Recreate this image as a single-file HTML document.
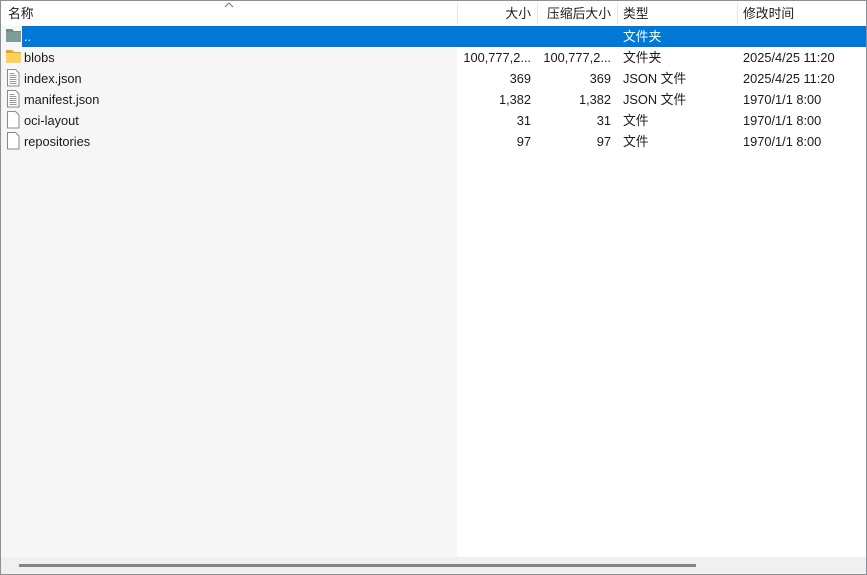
<!DOCTYPE html>
<html><head><meta charset="utf-8"><style>
*{margin:0;padding:0;box-sizing:border-box}
body{width:867px;height:575px;background:#fff;font-family:"Liberation Sans","Noto Sans CJK SC",sans-serif;font-size:12.8px;color:#1a1a1a;position:relative;overflow:hidden}
.frame{position:absolute;left:0;top:0;width:867px;height:575px;border:1px solid #8b9099}
.namebg{position:absolute;left:1px;top:26px;width:456px;height:531px;background:#f6f6f6}
.hdr{position:absolute;top:1px;height:25px;line-height:25px}
.sep{position:absolute;top:3px;width:1px;height:21px;background:#e5e5e5}
.row{position:absolute;left:1px;width:865px;height:21px;line-height:22px}
.c{position:absolute;white-space:nowrap}
.sel{position:absolute;left:22px;top:26px;width:844px;height:21px;background:#0078d7}
.sb{position:absolute;left:1px;top:557px;width:865px;height:17px;background:#f0f0f0}
.thumb{position:absolute;left:19px;top:564px;width:677px;height:3px;background:#858585}
</style></head><body>
<div class="namebg"></div>
<div class="hdr c" style="left:8px">名称</div>
<svg style="position:absolute;left:224px;top:2px" width="10" height="6"><path d="M1 5L5 1L9 5" fill="none" stroke="#777" stroke-width="1"/></svg>
<div class="hdr c" style="right:336px">大小</div>
<div class="hdr c" style="right:256px">压缩后大小</div>
<div class="hdr c" style="left:623px">类型</div>
<div class="hdr c" style="left:743px">修改时间</div>
<div class="sep" style="left:457px"></div>
<div class="sep" style="left:537px"></div>
<div class="sep" style="left:617px"></div>
<div class="sep" style="left:737px"></div>
<div class="sel"></div>
<svg style="position:absolute;left:5px;top:28px" width="17" height="15"><path d="M1 1h6l2 2h7v11H1z" fill="#6f8f86"/><rect x="1" y="4" width="15" height="10" fill="#7f9c9a"/></svg>
<svg style="position:absolute;left:5px;top:49px" width="17" height="15"><path d="M1 1h6l2 2h7v11H1z" fill="#e8a722"/><rect x="1" y="4" width="15" height="10" fill="#fcd15a"/></svg>
<svg style="position:absolute;left:7px;top:69px" width="13" height="18"><path d="M.5 .5h8l3.5 3.5v13H.5z" fill="#fff" stroke="#8a8a8a"/><path d="M2.5 4.5h5M2.5 6.5h7M2.5 8.5h7M2.5 10.5h7M2.5 12.5h7M2.5 14.5h7" stroke="#999" stroke-width="1"/></svg>
<svg style="position:absolute;left:7px;top:90px" width="13" height="18"><path d="M.5 .5h8l3.5 3.5v13H.5z" fill="#fff" stroke="#8a8a8a"/><path d="M2.5 4.5h5M2.5 6.5h7M2.5 8.5h7M2.5 10.5h7M2.5 12.5h7M2.5 14.5h7" stroke="#999" stroke-width="1"/></svg>
<svg style="position:absolute;left:7px;top:111px" width="13" height="18"><path d="M.5 .5h8l3.5 3.5v13H.5z" fill="#fff" stroke="#8a8a8a"/></svg>
<svg style="position:absolute;left:7px;top:132px" width="13" height="18"><path d="M.5 .5h8l3.5 3.5v13H.5z" fill="#fff" stroke="#8a8a8a"/></svg>
<div class="row" style="top:26px;color:#fff"><span class="c" style="left:23px">..</span><span class="c" style="left:622px">文件夹</span></div>
<div class="row" style="top:47px"><span class="c" style="left:23px">blobs</span><span class="c" style="right:335px">100,777,2...</span><span class="c" style="right:255px">100,777,2...</span><span class="c" style="left:622px">文件夹</span><span class="c" style="left:742px">2025/4/25 11:20</span></div>
<div class="row" style="top:68px"><span class="c" style="left:23px">index.json</span><span class="c" style="right:335px">369</span><span class="c" style="right:255px">369</span><span class="c" style="left:622px">JSON 文件</span><span class="c" style="left:742px">2025/4/25 11:20</span></div>
<div class="row" style="top:89px"><span class="c" style="left:23px">manifest.json</span><span class="c" style="right:335px">1,382</span><span class="c" style="right:255px">1,382</span><span class="c" style="left:622px">JSON 文件</span><span class="c" style="left:742px">1970/1/1 8:00</span></div>
<div class="row" style="top:110px"><span class="c" style="left:23px">oci-layout</span><span class="c" style="right:335px">31</span><span class="c" style="right:255px">31</span><span class="c" style="left:622px">文件</span><span class="c" style="left:742px">1970/1/1 8:00</span></div>
<div class="row" style="top:131px"><span class="c" style="left:23px">repositories</span><span class="c" style="right:335px">97</span><span class="c" style="right:255px">97</span><span class="c" style="left:622px">文件</span><span class="c" style="left:742px">1970/1/1 8:00</span></div>
<div class="sb"></div>
<div class="thumb"></div>
<div class="frame"></div>
</body></html>
